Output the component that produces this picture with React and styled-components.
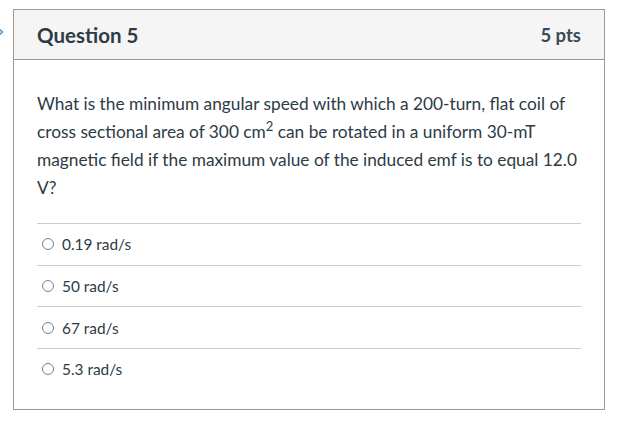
import React from 'react';
import styled, { createGlobalStyle } from 'styled-components';

const GlobalStyle = createGlobalStyle`
  body {
    margin: 0;
    background: #fff;
    font-family: Lato, "Liberation Sans", sans-serif;
    color: #2d3b45;
  }
`;

const Page = styled.div`
  display: flex;
  align-items: flex-start;
  padding: 9px 0 0 0;
`;

const Chevron = styled.div`
  width: 13px;
  margin-left: -7px;
  margin-right: 7px;
  margin-top: 16px;
  color: #5b9bd1;
  display: flex;
`;

const Card = styled.div`
  width: 590px;
  height: 399px;
  border: 1px solid #9a9a9a;
  display: flex;
  flex-direction: column;
`;

const Header = styled.div`
  height: 49px;
  background: #f5f5f5;
  border-bottom: 1px solid #9a9a9a;
  display: flex;
  align-items: center;
  justify-content: space-between;
  padding: 0 23px;
`;

const Title = styled.h2`
  margin: 0;
  font-size: 20.5px;
  font-weight: 700;
  color: #2d3b45;
`;

const Points = styled.span`
  font-size: 18.5px;
  font-weight: 700;
  color: #3d4a52;
`;

const Body = styled.div`
  padding: 30px 23px 0 23px;
`;

const Text = styled.p`
  margin: 0 0 21px 0;
  font-size: 17.3px;
  line-height: 28px;
  color: #2d3b45;

  sup {
    font-size: 13px;
    line-height: 0;
  }
`;

const Answers = styled.div`
  display: flex;
  flex-direction: column;
`;

const Answer = styled.label`
  box-sizing: border-box;
  display: flex;
  align-items: center;
  gap: 8px;
  height: 41.7px;
  border-top: 1px solid #c7cdd1;
  padding-left: 5px;
  font-size: 15.4px;
  color: #2d3b45;
`;

const Radio = styled.span`
  width: 10px;
  height: 10px;
  border: 1.5px solid #73818b;
  border-radius: 50%;
  background: #fff;
`;

const answers = ['0.19 rad/s', '50 rad/s', '67 rad/s', '5.3 rad/s'];

export default function App() {
  return (
    <>
      <GlobalStyle />
      <Page>
        <Chevron>
          <svg width="13" height="14" viewBox="0 0 13 14">
            <path d="M3 1.5 L9.5 7 L3 12.5" fill="none" stroke="currentColor" strokeWidth="1.6" />
          </svg>
        </Chevron>
        <Card>
          <Header>
            <Title>Question 5</Title>
            <Points>5 pts</Points>
          </Header>
          <Body>
            <Text>
              What is the minimum angular speed with which a 200-turn, flat coil of cross sectional area of 300 cm<sup>2</sup> can be rotated in a uniform 30-mT magnetic field if the maximum value of the induced emf is to equal 12.0 V?
            </Text>
            <Answers>
              {answers.map((a) => (
                <Answer key={a}>
                  <Radio />
                  {a}
                </Answer>
              ))}
            </Answers>
          </Body>
        </Card>
      </Page>
    </>
  );
}
